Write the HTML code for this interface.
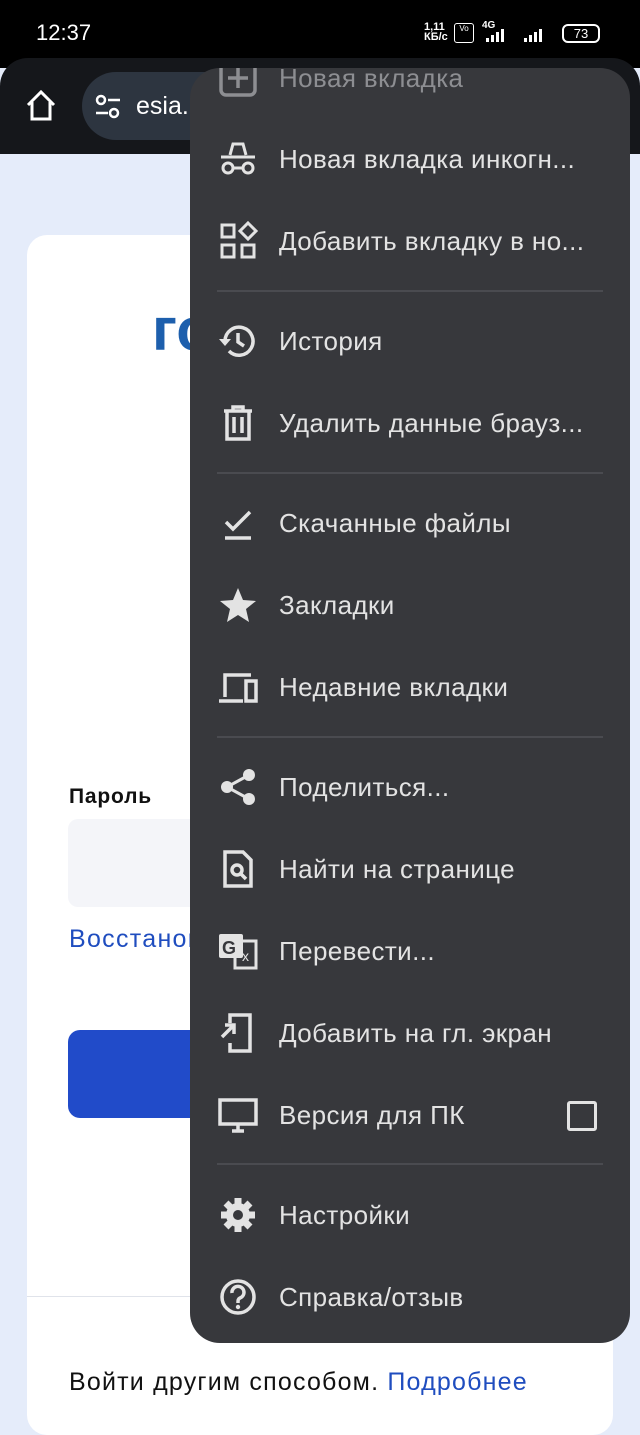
<!DOCTYPE html>
<html><head><meta charset="utf-8"><style>
*{margin:0;padding:0;box-sizing:border-box}
body{width:640px;height:1423px;overflow:hidden;background:#e5ecfa;font-family:"Liberation Sans","Noto Sans CJK SC",sans-serif;position:relative}
.status{position:absolute;left:0;top:0;width:640px;height:68px;background:#000;color:#fff}
.tb{position:absolute;left:0;top:58px;width:640px;height:96px;background:#15171b;border-radius:28px 28px 0 0}
.card{position:absolute;left:27px;top:235px;width:586px;height:1200px;background:#fff;border-radius:20px}
.menu{position:absolute;left:190px;top:68px;width:440px;height:1275px;background:#37383c;border-radius:30px;overflow:hidden}
.it{position:absolute;left:0;width:440px;height:82px;color:#e3e3e3;font-size:26px;letter-spacing:0.4px;display:flex;align-items:center}
.it span{position:absolute;left:89px}
.it svg{position:absolute;left:28px;width:40px;height:40px}
.dv{position:absolute;left:27px;width:386px;height:2px;background:#4a4b50}
</style></head><body>
<div class="status">
<div style="position:absolute;left:36px;top:20px;font-size:22px">12:37</div>
<div style="position:absolute;left:424px;top:22px;font-size:11px;line-height:10px;font-weight:bold">1,11<br>КБ/с</div>
<div style="position:absolute;left:454px;top:23px;width:20px;height:20px;border:1.5px solid #fff;border-radius:3px;font-size:8px;text-align:center">Vo</div>
<div style="position:absolute;left:482px;top:20px;font-size:10px;font-weight:bold">4G</div>
<svg style="position:absolute;left:482px;top:28px" width="72" height="16"><g fill="#fff"><rect x="4" y="10" width="3" height="4"/><rect x="9" y="7" width="3" height="7"/><rect x="14" y="4" width="3" height="10"/><rect x="19" y="1" width="3" height="13"/><rect x="42" y="10" width="3" height="4"/><rect x="47" y="7" width="3" height="7"/><rect x="52" y="4" width="3" height="10"/><rect x="57" y="1" width="3" height="13"/></g></svg>
<div style="position:absolute;left:562px;top:24px;width:38px;height:19px;border:2px solid #fff;border-radius:6px;font-size:13px;text-align:center;line-height:15px">73</div>
</div>
<div class="tb">
<svg style="position:absolute;left:24px;top:30px" width="34" height="34" viewBox="0 0 34 34"><path d="M4 17 L17 4 L30 17 M8 14 V31 H26 V14" fill="none" stroke="#fff" stroke-width="3"/></svg>
<div style="position:absolute;left:82px;top:14px;width:300px;height:68px;border-radius:34px;background:#2d3540"></div>
<svg style="position:absolute;left:94px;top:36px" width="28" height="26" viewBox="0 0 28 26"><g fill="none" stroke="#fff" stroke-width="2.5"><circle cx="7" cy="6" r="4"/><circle cx="20" cy="19" r="4"/><path d="M14 6h12M2 19h12"/></g></svg>
<div style="position:absolute;left:136px;top:34px;color:#fff;font-size:25px">esia.</div>
</div>
<div class="card">
<div style="position:absolute;left:125px;top:60px;font-size:60px;font-weight:bold;color:#1d5fad">го</div>
<div style="position:absolute;left:42px;top:550px;font-size:21px;font-weight:bold;color:#111;letter-spacing:0.8px">Пароль</div>
<div style="position:absolute;left:41px;top:584px;width:530px;height:88px;background:#f4f5f9;border-radius:10px"></div>
<div style="position:absolute;left:42px;top:690px;font-size:25px;color:#1f4dbf;letter-spacing:1.3px">Восстановить</div>
<div style="position:absolute;left:41px;top:795px;width:530px;height:88px;background:#214bc9;border-radius:12px"></div>
<div style="position:absolute;left:0;top:1061px;width:586px;height:1px;background:#e0e3ea"></div>
<div style="position:absolute;left:42px;top:1133px;font-size:25px;color:#111;letter-spacing:1.2px">Войти другим способом. <span style="color:#1f4dbf">Подробнее</span></div>
</div>
<div class="menu">
<div class="it" style="top:-31px;color:#8d8e92"><svg viewBox="0 0 40 40"><rect x="3" y="3" width="34" height="34" rx="5" fill="none" stroke="#8d8e92" stroke-width="3.5"/><path d="M20 10v20M10 20h20" stroke="#8d8e92" stroke-width="3.5"/></svg><span>Новая вкладка</span></div>
<div class="it" style="top:50px"><svg viewBox="0 0 40 40"><g fill="none" stroke="#e3e3e3" stroke-width="3"><path d="M12 16 L15 5 H25 L28 16 M3 18 H37"/><circle cx="10" cy="29" r="5"/><circle cx="30" cy="29" r="5"/><path d="M15 29h10"/></g></svg><span>Новая вкладка инкогн...</span></div>
<div class="it" style="top:132px"><svg viewBox="0 0 40 40"><g fill="none" stroke="#e3e3e3" stroke-width="3"><rect x="4" y="4" width="12" height="12"/><rect x="4" y="24" width="12" height="12"/><rect x="24" y="24" width="12" height="12"/><path d="M30 2 L38 10 L30 18 L22 10Z"/></g></svg><span>Добавить вкладку в но...</span></div>
<div class="dv" style="top:222px"></div>
<div class="it" style="top:232px"><svg viewBox="0 0 40 40"><g fill="none" stroke="#e3e3e3" stroke-width="3.5"><path d="M7 20 A14 14 0 1 1 11 30"/><path d="M20 12v9l6 4"/></g><path d="M1 18h12l-6 7z" fill="#e3e3e3"/></svg><span>История</span></div>
<div class="it" style="top:314px"><svg viewBox="0 0 40 40"><g fill="none" stroke="#e3e3e3" stroke-width="3.5"><path d="M6 8h28M15 8V4h10v4M9 8v28h22V8M16 14v16M24 14v16"/></g></svg><span>Удалить данные брауз...</span></div>
<div class="dv" style="top:404px"></div>
<div class="it" style="top:414px"><svg viewBox="0 0 40 40"><g fill="none" stroke="#e3e3e3" stroke-width="3.5"><path d="M8 19l7 7 17-17M7 35h26"/></g></svg><span>Скачанные файлы</span></div>
<div class="it" style="top:496px"><svg viewBox="0 0 40 40"><path d="M20 3l5 12 13 1-10 8 3 13-11-7-11 7 3-13-10-8 13-1z" fill="#e3e3e3"/></svg><span>Закладки</span></div>
<div class="it" style="top:578px"><svg viewBox="0 0 40 40"><g fill="none" stroke="#e3e3e3" stroke-width="3.5"><path d="M7 30V8h26M1 34h24"/><rect x="28" y="14" width="10" height="20"/></g></svg><span>Недавние вкладки</span></div>
<div class="dv" style="top:668px"></div>
<div class="it" style="top:678px"><svg viewBox="0 0 40 40"><g fill="#e3e3e3"><circle cx="31" cy="8" r="6"/><circle cx="9" cy="20" r="6"/><circle cx="31" cy="32" r="6"/></g><path d="M31 8L9 20 31 32" fill="none" stroke="#e3e3e3" stroke-width="3"/></svg><span>Поделиться...</span></div>
<div class="it" style="top:760px"><svg viewBox="0 0 40 40"><g fill="none" stroke="#e3e3e3" stroke-width="3.5"><path d="M7 3h18l8 8v26H7z"/><circle cx="19" cy="21" r="5"/><path d="M23 25l5 5"/></g></svg><span>Найти на странице</span></div>
<div class="it" style="top:842px"><svg viewBox="0 0 40 40"><rect x="1" y="3" width="24" height="24" rx="2" fill="#e3e3e3"/><text x="4" y="23" font-size="18" font-weight="bold" fill="#37383c" font-family="Liberation Sans">G</text><path d="M25 10h13v27H17v-10" fill="none" stroke="#e3e3e3" stroke-width="3"/><text x="24" y="30" font-size="14" fill="#e3e3e3" font-family="Liberation Sans">x</text></svg><span>Перевести...</span></div>
<div class="it" style="top:924px"><svg viewBox="0 0 40 40"><g fill="none" stroke="#e3e3e3" stroke-width="3.5"><path d="M12 10V2h20v36H12v-8M4 24l12-12M7 12h9v9"/></g></svg><span>Добавить на гл. экран</span></div>
<div class="it" style="top:1006px"><svg viewBox="0 0 40 40"><g fill="none" stroke="#e3e3e3" stroke-width="3.5"><rect x="2" y="5" width="36" height="24"/><path d="M14 36h12M20 29v7"/></g></svg><span>Версия для ПК</span><div style="position:absolute;left:377px;top:27px;width:30px;height:30px;border:3px solid #e3e3e3;border-radius:3px"></div></div>
<div class="dv" style="top:1095px"></div>
<div class="it" style="top:1106px"><svg viewBox="0 0 40 40"><g fill="#e3e3e3"><circle cx="20" cy="20" r="12"/><g stroke="#e3e3e3" stroke-width="7"><path d="M20 3v34M3 20h34M8 8l24 24M32 8L8 32"/></g></g><circle cx="20" cy="20" r="5" fill="#37383c"/></svg><span>Настройки</span></div>
<div class="it" style="top:1188px"><svg viewBox="0 0 40 40"><circle cx="20" cy="20" r="16" fill="none" stroke="#e3e3e3" stroke-width="3.5"/><path d="M14 16a6 6 0 1 1 8 5c-2 1-2 2-2 5" fill="none" stroke="#e3e3e3" stroke-width="3.5"/><circle cx="20" cy="30" r="2.2" fill="#e3e3e3"/></svg><span>Справка/отзыв</span></div>
</div>
</body></html>
